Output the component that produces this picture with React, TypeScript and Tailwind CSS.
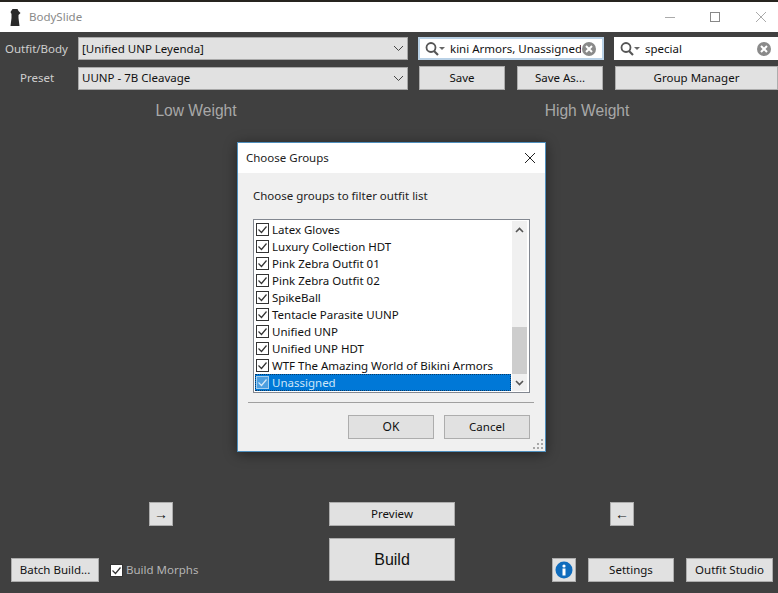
import React from "react";

const FONT = "font-['Noto_Sans','Liberation_Sans',sans-serif] text-[11.5px]";

const groups = [
  "Latex Gloves",
  "Luxury Collection HDT",
  "Pink Zebra Outfit 01",
  "Pink Zebra Outfit 02",
  "SpikeBall",
  "Tentacle Parasite UUNP",
  "Unified UNP",
  "Unified UNP HDT",
  "WTF The Amazing World of Bikini Armors",
  "Unassigned",
];

function Btn({
  className,
  children,
}: {
  className?: string;
  children: React.ReactNode;
}) {
  return (
    <button
      className={`flex h-6 shrink-0 items-center justify-center border border-[#adadad] bg-[#e1e1e1] text-[#111] ${className}`}
    >
      {children}
    </button>
  );
}

function Select({ value }: { value: string }) {
  return (
    <div className="flex h-[23px] w-[330px] items-center justify-between border border-[#a8a8a8] bg-[#e1e1e1] pl-[3px] pr-[3px] text-[#111]">
      <span>{value}</span>
      <svg width="11" height="7" viewBox="0 0 11 7" fill="none" stroke="#444" strokeWidth="1">
        <path d="M1 1l4.5 4.5L10 1" />
      </svg>
    </div>
  );
}

function SearchBox({
  value,
  className,
  focused,
}: {
  value: string;
  className?: string;
  focused?: boolean;
}) {
  return (
    <div
      className={`flex h-[23px] items-center bg-white pl-[4px] text-[#111] ${
        focused ? "border-2 border-[#b9d1e6]" : "border border-white"
      } ${className}`}
    >
      <svg width="24" height="16" viewBox="0 0 24 16" className="shrink-0" fill="none">
        <circle cx="7" cy="6.5" r="4.5" stroke="#555" strokeWidth="1.8" />
        <path d="M10 10l4 4" stroke="#555" strokeWidth="2.2" />
        <path d="M15 6h6l-3 3z" fill="#666" />
      </svg>
      <span className="ml-[2px] flex-1 overflow-hidden whitespace-nowrap">{value}</span>
      <svg width="16" height="16" viewBox="0 0 16 16" className="mr-[5px] shrink-0">
        <circle cx="8" cy="8" r="7" fill="#8a8a8a" />
        <path d="M5 5l6 6M11 5l-6 6" stroke="#fff" strokeWidth="2" />
      </svg>
    </div>
  );
}

function Check({ active }: { active?: boolean }) {
  return (
    <svg width="13" height="13" viewBox="0 0 13 13" className="shrink-0">
      <rect
        x="0.5"
        y="0.5"
        width="12"
        height="12"
        fill={active ? "#4d9fe0" : "#fff"}
        stroke={active ? "#a5cfee" : "#333"}
      />
      <path d="M2.5 6.5l3 3 5-6" fill="none" stroke={active ? "#d7e9f7" : "#333"} strokeWidth="1.2" />
    </svg>
  );
}

function ChooseGroups() {
  return (
    <div className="absolute left-[237px] top-[142px] flex h-[310px] w-[309px] flex-col border border-[#4f8fbd] bg-[#f0f0f0] shadow-[0_2px_12px_rgba(0,0,0,0.45)]">
      <div className="flex h-[30px] shrink-0 items-center justify-between bg-white pl-[8px] pr-[9px] text-[#222]">
        <span>Choose Groups</span>
        <svg width="12" height="12" viewBox="0 0 12 12" stroke="#222" strokeWidth="1">
          <path d="M1 1l10 10M11 1L1 11" />
        </svg>
      </div>
      <div className="ml-[15px] mt-[14px] leading-[18px] text-[#222]">
        Choose groups to filter outfit list
      </div>
      <div className="ml-[15px] mt-[14px] flex h-[174px] w-[277px] border border-[#828790] bg-white py-[1px] pl-[1px] pr-[2px]">
        <div className="flex flex-1 flex-col">
          {groups.map((g, i) => {
            const active = i === groups.length - 1;
            return (
              <div
                key={g}
                className={`flex h-[17px] items-center gap-[3px] whitespace-nowrap pl-[1px] ${
                  active
                    ? "mr-[1px] bg-[#0078d7] text-[#cfe6f8] outline-1 -outline-offset-1 outline-dotted outline-[#0b3a66]"
                    : "text-[#111]"
                }`}
              >
                <Check active={active} />
                <span>{g}</span>
              </div>
            );
          })}
        </div>
        <div className="flex w-[15px] shrink-0 flex-col bg-[#f0f0f0]">
          <div className="flex h-[17px] items-center justify-center">
            <svg width="9" height="6" viewBox="0 0 9 6" fill="none" stroke="#555" strokeWidth="1.6">
              <path d="M1 5l3.5-3.5L8 5" />
            </svg>
          </div>
          <div className="mt-auto h-[47px] bg-[#cdcdcd]" />
          <div className="flex h-[17px] items-center justify-center">
            <svg width="9" height="6" viewBox="0 0 9 6" fill="none" stroke="#555" strokeWidth="1.6">
              <path d="M1 1l3.5 3.5L8 1" />
            </svg>
          </div>
        </div>
      </div>
      <div className="ml-[10px] mt-[9px] h-px w-[286px] bg-[#a0a0a0]" />
      <div className="ml-[110px] mt-[12px] flex gap-[10px]">
        <Btn className="w-[86px] text-xs">OK</Btn>
        <Btn className="w-[86px]">Cancel</Btn>
      </div>
      <svg width="11" height="11" viewBox="0 0 11 11" className="absolute bottom-[1px] right-[1px]" fill="#a8a8a8">
        <rect x="8" y="0" width="2" height="2" />
        <rect x="4" y="4" width="2" height="2" />
        <rect x="8" y="4" width="2" height="2" />
        <rect x="0" y="8" width="2" height="2" />
        <rect x="4" y="8" width="2" height="2" />
        <rect x="8" y="8" width="2" height="2" />
      </svg>
    </div>
  );
}

export default function App() {
  return (
    <div className={`relative flex h-[593px] w-[778px] flex-col overflow-hidden bg-[#404040] ${FONT}`}>
      <div className="h-[2px] shrink-0 bg-[#26241f]" />

      {/* Title bar */}
      <div className="flex h-[30px] shrink-0 items-center bg-white pl-[10px]">
        <svg width="11" height="17" viewBox="0 0 10 17" fill="#2a2a2a">
          <path d="M2 0h5l1 2 2 2-2 2v3l1 8H0l1-8V5L0 3z" />
        </svg>
        <span className="ml-[8px] text-[#8a8a8a]">BodySlide</span>
        <div className="ml-auto flex items-center pr-[12px]">
          <div className="h-px w-[10px] bg-[#aaa]" />
          <div className="ml-[35px] h-[10px] w-[10px] border border-[#888]" />
          <svg width="10" height="10" viewBox="0 0 10 10" stroke="#aaa" strokeWidth="1" className="ml-[36px]">
            <path d="M0 0l10 10M10 0L0 10" />
          </svg>
        </div>
      </div>

      {/* Toolbar */}
      <div className="mt-[5px] flex h-[23px] shrink-0 items-center">
        <span className="w-[78px] pl-[5px] text-[#cfcfcf]">Outfit/Body</span>
        <Select value="[Unified UNP Leyenda]" />
        <SearchBox value="kini Armors, Unassigned" focused className="ml-[10px] w-[186px]" />
        <SearchBox value="special" className="ml-[10px] w-[164px]" />
      </div>
      <div className="mt-[6px] flex h-6 shrink-0 items-center">
        <span className="w-[78px] pl-[20px] text-[#cfcfcf]">Preset</span>
        <Select value="UUNP - 7B Cleavage" />
        <Btn className="ml-[11px] w-[86px]">Save</Btn>
        <Btn className="ml-[12px] w-[86px]">Save As...</Btn>
        <Btn className="ml-[12px] w-[163px]">Group Manager</Btn>
      </div>

      {/* Weight headers */}
      <div className="mt-[9px] grid shrink-0 grid-cols-2 font-['Liberation_Sans',sans-serif] text-[15.6px] text-[#a8a8a8]">
        <div className="pl-[3px] text-center">Low Weight</div>
        <div className="pl-[7px] text-center">High Weight</div>
      </div>

      {/* Bottom controls */}
      <div className="mb-[11px] mt-auto flex h-[80px]">
        <div className="flex w-[329px] flex-col">
          <Btn className="ml-[149px] w-6 font-['Liberation_Sans',sans-serif] text-sm">→</Btn>
          <div className="mt-auto flex items-center pl-[11px]">
            <Btn className="w-[88px]">Batch Build...</Btn>
            <div className="ml-[11px] flex items-center gap-[3px] text-[#b4b4b4]">
              <Check />
              <span>Build Morphs</span>
            </div>
          </div>
        </div>
        <div className="flex w-[126px] flex-col gap-3">
          <Btn className="w-full">Preview</Btn>
          <Btn className="h-[43px] w-full font-['Liberation_Sans',sans-serif] text-base">Build</Btn>
        </div>
        <div className="flex flex-1 flex-col">
          <Btn className="ml-[155px] w-6 font-['Liberation_Sans',sans-serif] text-sm">←</Btn>
          <div className="mt-auto flex items-center pl-[97px]">
            <Btn className="w-6">
              <svg width="18" height="18" viewBox="0 0 18 18">
                <circle cx="9" cy="9" r="8.5" fill="#0f6cbd" />
                <circle cx="9" cy="5" r="1.6" fill="#fff" />
                <rect x="7.5" y="7.5" width="3" height="7" fill="#fff" />
              </svg>
            </Btn>
            <Btn className="ml-3 w-[86px]">Settings</Btn>
            <Btn className="ml-3 w-[87px]">Outfit Studio</Btn>
          </div>
        </div>
      </div>

      <ChooseGroups />
    </div>
  );
}
